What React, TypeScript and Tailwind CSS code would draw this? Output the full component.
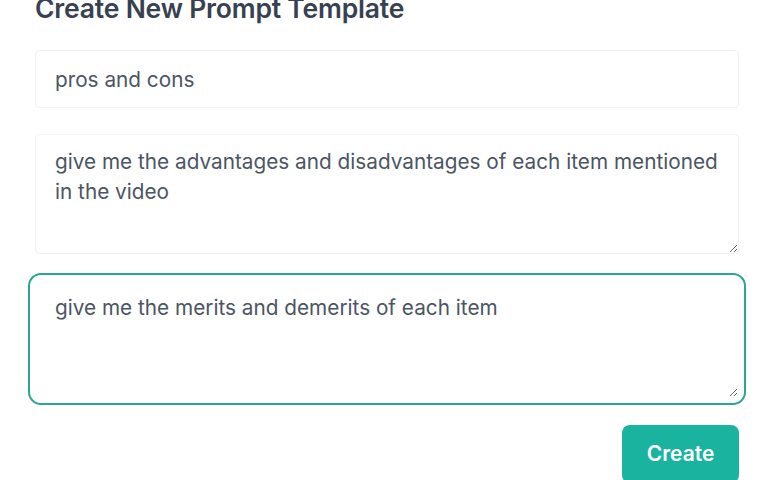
import React, { useState } from 'react';
import { X } from 'lucide-react';

function App() {
  const [name, setName] = useState('pros and cons');
  const [prompt, setPrompt] = useState('give me the advantages and disadvantages of each item mentioned in the video');
  const [alt, setAlt] = useState('give me the merits and demerits of each item');

  return (
    <div className="h-[480px] w-[768px] overflow-hidden bg-white font-['Inter',sans-serif]">
      <div className="relative mx-[35px] w-[704px]">
        {/* Header */}
        <h2 className="mt-[-8px] text-[26.5px] leading-[32px] font-semibold tracking-[-0.2px] text-[#374151]">
          Create New Prompt Template
        </h2>
        <button className="absolute -top-[13px] right-[-10px] text-[#6b7280]">
          <X className="h-[20px] w-[20px]" strokeWidth={2} />
        </button>

        {/* Form */}
        <div className="mt-[26px] flex flex-col gap-[26px]">
          <input
            value={name}
            onChange={(e) => setName(e.target.value)}
            className="h-[58px] w-full rounded-[4px] border border-[#f1f2f4] px-[19px] text-[20.75px] text-[#4b5563] focus:outline-none"
          />
          <textarea
            value={prompt}
            onChange={(e) => setPrompt(e.target.value)}
            className="h-[120px] w-full rounded-[4px] border border-[#f1f2f4] px-[19px] pt-[12px] text-[20.75px] leading-[30px] text-[#4b5563] focus:outline-none"
          />
          <textarea
            autoFocus
            value={alt}
            onChange={(e) => setAlt(e.target.value)}
            className="h-[118px] w-full rounded-[6px] border border-transparent px-[19px] pt-[12px] text-[20.75px] leading-[30px] text-[#4b5563] caret-[#374151] outline-[2.5px] outline-offset-[5px] outline-[#2aa596] outline-solid focus:outline-[2.5px]"
          />
        </div>

        {/* Footer */}
        <div className="mt-[27px] flex justify-end">
          <button className="h-[58px] w-[117px] rounded-[8px] bg-[#19b39f] text-[21px] font-semibold text-white">
            Create
          </button>
        </div>
      </div>
    </div>
  );
}

export default App;
